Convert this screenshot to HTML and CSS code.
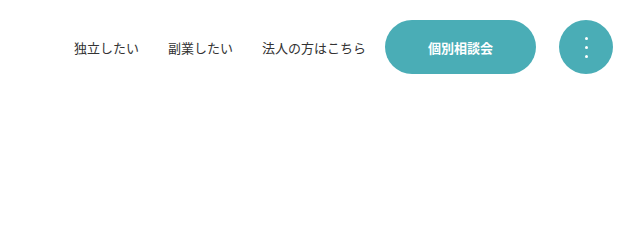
FILE: index.html
```html
<!DOCTYPE html>
<html lang="ja">
<head>
<meta charset="utf-8">
<title>Header</title>
<link rel="stylesheet" href="styles.css">
</head>
<body>
<header class="site-header">
  <nav class="nav">
    <a class="nav-link" href="#">独立したい</a>
    <a class="nav-link" href="#">副業したい</a>
    <a class="nav-link" href="#">法人の方はこちら</a>
  </nav>
  <a class="cta" href="#">個別相談会</a>
  <button class="menu-btn" type="button" aria-label="メニュー">
    <span class="dot"></span>
    <span class="dot"></span>
    <span class="dot"></span>
  </button>
</header>
</body>
</html>
```
FILE: styles.css
```css
html, body {
  margin: 0;
  padding: 0;
  background: #ffffff;
}
body {
  font-family: "Noto Sans CJK JP", "Noto Sans", sans-serif;
  color: #333333;
}
.site-header {
  display: flex;
  justify-content: flex-end;
  align-items: center;
  padding: 20px 25px 0 0;
}
.nav {
  display: flex;
  align-items: center;
  gap: 29px;
  margin-right: 19px;
}
.nav-link {
  font-size: 13px;
  line-height: 1;
  color: #333333;
  text-decoration: none;
}
.cta {
  display: flex;
  align-items: center;
  justify-content: center;
  width: 151px;
  height: 54px;
  border-radius: 27px;
  background: #4aadb6;
  color: #ffffff;
  font-size: 13px;
  font-weight: 700;
  text-decoration: none;
  margin-right: 23px;
}
.menu-btn {
  display: flex;
  flex-direction: column;
  align-items: center;
  justify-content: center;
  gap: 6px;
  width: 54px;
  height: 54px;
  border: none;
  border-radius: 50%;
  background: #4aadb6;
  padding: 0;
  cursor: pointer;
}
.dot {
  display: block;
  width: 3px;
  height: 3px;
  border-radius: 50%;
  background: #ffffff;
}
```
